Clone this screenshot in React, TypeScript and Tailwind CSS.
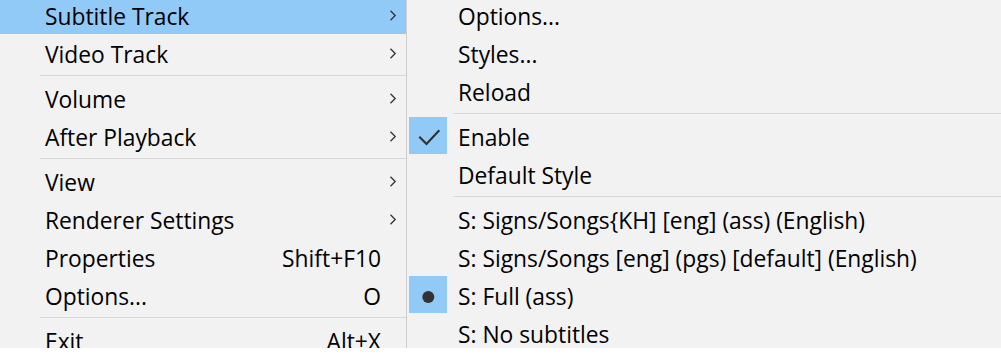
import React from "react";

type Item =
  | { kind: "sep" }
  | {
      kind: "item";
      label: string;
      shortcut?: string;
      submenu?: boolean;
      active?: boolean;
      mark?: "check" | "dot";
    };

const mainMenu: Item[] = [
  { kind: "item", label: "Subtitle Track", submenu: true, active: true },
  { kind: "item", label: "Video Track", submenu: true },
  { kind: "sep" },
  { kind: "item", label: "Volume", submenu: true },
  { kind: "item", label: "After Playback", submenu: true },
  { kind: "sep" },
  { kind: "item", label: "View", submenu: true },
  { kind: "item", label: "Renderer Settings", submenu: true },
  { kind: "item", label: "Properties", shortcut: "Shift+F10" },
  { kind: "item", label: "Options...", shortcut: "O" },
  { kind: "sep" },
  { kind: "item", label: "Exit", shortcut: "Alt+X" },
];

const subMenu: Item[] = [
  { kind: "item", label: "Options..." },
  { kind: "item", label: "Styles..." },
  { kind: "item", label: "Reload" },
  { kind: "sep" },
  { kind: "item", label: "Enable", mark: "check" },
  { kind: "item", label: "Default Style" },
  { kind: "sep" },
  { kind: "item", label: "S: Signs/Songs{KH] [eng] (ass) (English)" },
  { kind: "item", label: "S: Signs/Songs [eng] (pgs) [default] (English)" },
  { kind: "item", label: "S: Full (ass)", mark: "dot" },
  { kind: "item", label: "S: No subtitles" },
];

const Chevron = () => (
  <svg width="8" height="11" viewBox="0 0 8 11" className="mr-[9px] shrink-0">
    <path d="M1.5 0.8 L6.2 5.5 L1.5 10.2" fill="none" stroke="#333" strokeWidth="1.3" />
  </svg>
);

const Mark = ({ type }: { type: "check" | "dot" }) => (
  <div className="absolute left-[2px] top-0 w-[38px] h-[37px] bg-[#91c9f7]">
    <svg width="38" height="37" viewBox="0 0 38 37">
      {type === "check" ? (
        <path d="M10.3 19.7 L17.5 27 L30.3 13.2" fill="none" stroke="#333" strokeWidth="2.2" />
      ) : (
        <circle cx="19.3" cy="21" r="6" fill="#333" />
      )}
    </svg>
  </div>
);

const Menu = ({ items, className }: { items: Item[]; className: string }) => (
  <div className={"-mt-1 bg-[#f2f2f2] " + className}>
    {items.map((it, i) =>
      it.kind === "sep" ? (
        <div key={i} className="h-[7px] pt-[3px] pl-[46px]">
          <div className="h-px bg-[#d7d7d7]" />
        </div>
      ) : (
        <div
          key={i}
          className={
            "relative h-[38px] flex items-center pl-[51px] " +
            (it.active ? "bg-[#91c9f7]" : "")
          }
        >
          {it.mark && <Mark type={it.mark} />}
          <span className="flex-1 whitespace-nowrap pt-[3px]">{it.label}</span>
          {it.shortcut && (
            <span className="pr-[25px] whitespace-nowrap pt-[3px]">{it.shortcut}</span>
          )}
          {it.submenu && <Chevron />}
        </div>
      )
    )}
  </div>
);

export default function App() {
  return (
    <div
      className="w-[1001px] h-[355px] bg-white overflow-hidden text-[22.8px] leading-[30px] text-black"
      style={{ fontFamily: '"Segoe UI", "Open Sans", "Noto Sans", sans-serif' }}
    >
      <div className="flex h-[348px] overflow-hidden">
        <Menu items={mainMenu} className="shrink-0 w-[412px] ml-[-6px]" />
        <div className="w-px shrink-0 bg-[#cfcfcf]" />
        <Menu items={subMenu} className="flex-1 min-w-0" />
      </div>
    </div>
  );
}
